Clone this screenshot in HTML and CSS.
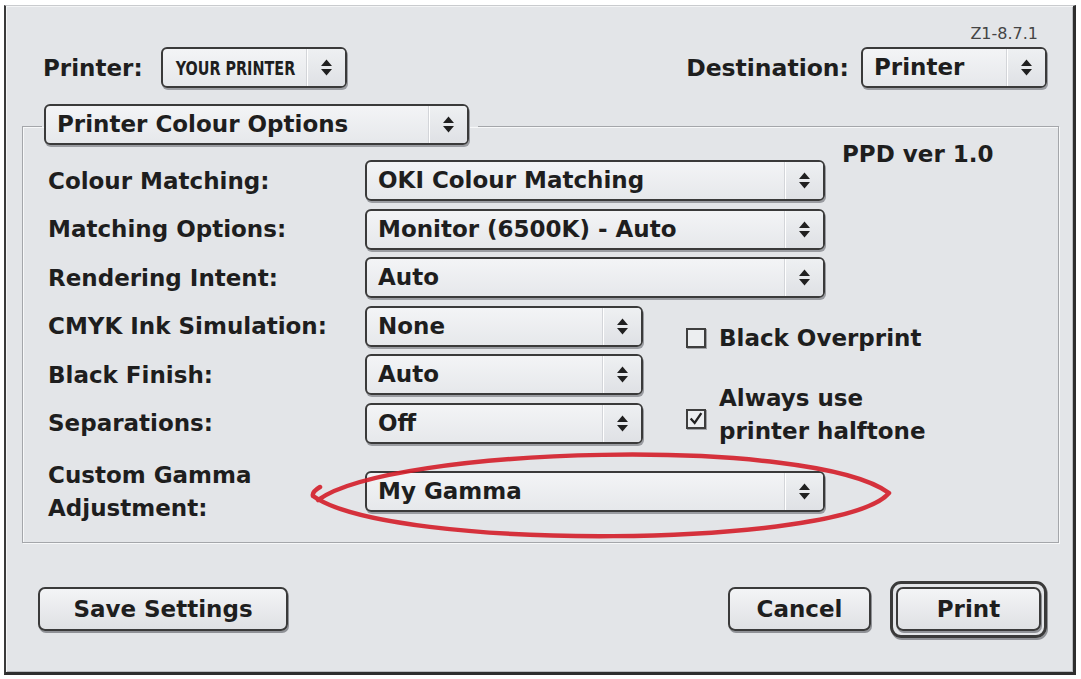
FILE: index.html
```html
<!DOCTYPE html>
<html>
<head>
<meta charset="utf-8">
<link rel="stylesheet" href="styles.css">
</head>
<body>
<div class="window">
  <div class="version">Z1-8.7.1</div>
  <div class="top-row">
    <div class="field">
      <span class="label">Printer:</span>
      <div class="popup popup-printer"><span class="ptext"><span class="narrow">YOUR PRINTER</span></span><span class="arrows"><svg width="13" height="19" viewBox="0 0 13 19"><polygon points="1,8 6.5,1.5 12,8" /><polygon points="1,11 12,11 6.5,17.5" /></svg></span></div>
    </div>
    <div class="field">
      <span class="label">Destination:</span>
      <div class="popup popup-dest"><span class="ptext">Printer</span><span class="arrows"><svg width="13" height="19" viewBox="0 0 13 19"><polygon points="1,8 6.5,1.5 12,8" /><polygon points="1,11 12,11 6.5,17.5" /></svg></span></div>
    </div>
  </div>

  <fieldset class="group">
    <legend class="group-legend">
      <div class="popup popup-legend"><span class="ptext">Printer Colour Options</span><span class="arrows"><svg width="13" height="19" viewBox="0 0 13 19"><polygon points="1,8 6.5,1.5 12,8" /><polygon points="1,11 12,11 6.5,17.5" /></svg></span></div>
    </legend>
    <div class="grid">
      <span class="label r1">Colour Matching:</span>
      <div class="popup wide r1"><span class="ptext">OKI Colour Matching</span><span class="arrows"><svg width="13" height="19" viewBox="0 0 13 19"><polygon points="1,8 6.5,1.5 12,8" /><polygon points="1,11 12,11 6.5,17.5" /></svg></span></div>
      <span class="label ppd">PPD ver 1.0</span>

      <span class="label r2">Matching Options:</span>
      <div class="popup wide r2"><span class="ptext">Monitor (6500K) - Auto</span><span class="arrows"><svg width="13" height="19" viewBox="0 0 13 19"><polygon points="1,8 6.5,1.5 12,8" /><polygon points="1,11 12,11 6.5,17.5" /></svg></span></div>

      <span class="label r3">Rendering Intent:</span>
      <div class="popup wide r3"><span class="ptext">Auto</span><span class="arrows"><svg width="13" height="19" viewBox="0 0 13 19"><polygon points="1,8 6.5,1.5 12,8" /><polygon points="1,11 12,11 6.5,17.5" /></svg></span></div>

      <span class="label r4">CMYK Ink Simulation:</span>
      <div class="popup short r4"><span class="ptext">None</span><span class="arrows"><svg width="13" height="19" viewBox="0 0 13 19"><polygon points="1,8 6.5,1.5 12,8" /><polygon points="1,11 12,11 6.5,17.5" /></svg></span></div>
      <div class="check check-overprint">
        <span class="box"></span>
        <span class="label">Black Overprint</span>
      </div>

      <span class="label r5">Black Finish:</span>
      <div class="popup short r5"><span class="ptext">Auto</span><span class="arrows"><svg width="13" height="19" viewBox="0 0 13 19"><polygon points="1,8 6.5,1.5 12,8" /><polygon points="1,11 12,11 6.5,17.5" /></svg></span></div>

      <span class="label r6">Separations:</span>
      <div class="popup short r6"><span class="ptext">Off</span><span class="arrows"><svg width="13" height="19" viewBox="0 0 13 19"><polygon points="1,8 6.5,1.5 12,8" /><polygon points="1,11 12,11 6.5,17.5" /></svg></span></div>
      <div class="check check-halftone">
        <span class="box checked"><svg width="18" height="18" viewBox="0 0 18 18"><path d="M3 8.5 L7.5 13.5 L15 2.5" /></svg></span>
        <span class="label two">Always use<br>printer halftone</span>
      </div>

      <span class="label two r7">Custom Gamma<br>Adjustment:</span>
      <div class="popup wide r7"><span class="ptext">My Gamma</span><span class="arrows"><svg width="13" height="19" viewBox="0 0 13 19"><polygon points="1,8 6.5,1.5 12,8" /><polygon points="1,11 12,11 6.5,17.5" /></svg></span></div>
    </div>
  </fieldset>

  <div class="buttons">
    <div class="btn btn-save">Save Settings</div>
    <div class="spacer"></div>
    <div class="btn btn-cancel">Cancel</div>
    <div class="default-ring"><div class="btn btn-print">Print</div></div>
  </div>
</div>
<svg class="circle" width="1081" height="679" viewBox="0 0 1081 679">
  <path d="M318 500 C 392 446, 812 436, 889 493 C 842 548, 392 552, 313 496 C 312 493, 315 490, 320 487" />
</svg>
</body>
</html>
```
FILE: styles.css
```css
html, body {
  margin: 0;
  padding: 0;
  background: #ffffff;
}

body {
  width: 1081px;
  height: 679px;
  overflow: hidden;
  position: relative;
  font-family: "DejaVu Sans", "Liberation Sans", sans-serif;
  color: #1e1e1e;
}

.window {
  margin: 5px 0 0 4px;
  width: 1072px;
  height: 670px;
  box-sizing: border-box;
  background: #e3e5e8;
  border-top: 1px solid #c9cbce;
  border-left: 2px solid #3a3a3a;
  border-right: 3px solid #2e2e2e;
  border-bottom: 3px solid #2e2e2e;
  box-shadow: inset 1px 1px 0 #f4f5f6, inset -1px -1px 0 #b9bbbf;
  padding: 19px 0 0 0;
  display: flex;
  flex-direction: column;
}

.version {
  align-self: flex-end;
  margin-right: 35px;
  font-size: 16px;
  line-height: 18px;
  color: #444;
}

.top-row {
  margin-top: 4px;
  padding: 0 26px 0 37px;
  display: flex;
  justify-content: space-between;
  align-items: center;
}

.field {
  display: flex;
  align-items: center;
}

.label {
  font-weight: bold;
  font-size: 23px;
  line-height: 28px;
  white-space: nowrap;
}

.label.two {
  line-height: 33px;
}

.field .label {
  margin-right: 18px;
}

.field + .field .label {
  margin-right: 12px;
  font-size: 23.5px;
}

.popup {
  box-sizing: border-box;
  height: 41px;
  border: 2px solid #3a3a3a;
  border-radius: 6px;
  background: linear-gradient(#f3f4f6, #e6e8eb);
  box-shadow: 1px 2px 0 #9a9ca1;
  display: flex;
  align-items: stretch;
}

.ptext {
  flex: 1;
  padding-left: 11px;
  font-weight: bold;
  font-size: 23px;
  line-height: 37px;
  white-space: nowrap;
  overflow: hidden;
}

.narrow {
  display: inline-block;
  font-family: "DejaVu Sans Condensed", "DejaVu Sans", sans-serif;
  font-size: 19.5px;
  transform: scaleX(0.82);
  transform-origin: 0 50%;
  padding-left: 2px;
}

.arrows {
  width: 37px;
  border-left: 1px solid #ffffff;
  box-shadow: -1px 0 0 #d3d5d9;
  background: linear-gradient(#eef0f2, #dfe1e5);
  border-radius: 0 4px 4px 0;
  display: flex;
  align-items: center;
  justify-content: center;
}

.arrows svg polygon {
  fill: #202020;
}

.popup-printer {
  width: 186px;
}

.popup-dest {
  width: 186px;
}

.popup-legend {
  width: 425px;
}

.group {
  margin: 16px 14px 0 16px;
  padding: 11px 10px 10px 25px;
  border: 1px solid #a4a6aa;
  box-shadow: 1px 1px 0 #f7f8f9, inset 1px 1px 0 #f7f8f9;
  min-width: 0;
}

.group-legend {
  margin-left: -6px;
  padding: 0 9px 4px 2px;
}

.grid {
  display: grid;
  grid-template-columns: 317px 278px 182px 1fr;
  grid-template-rows: repeat(6, 41px) 80px;
  row-gap: 7.6px;
  align-items: center;
}

.grid .label {
  grid-column: 1;
}

.r1 { grid-row: 1; }
.r2 { grid-row: 2; }
.r3 { grid-row: 3; }
.r4 { grid-row: 4; }
.r5 { grid-row: 5; }
.r6 { grid-row: 6; }
.r7 { grid-row: 7; }

.popup.wide {
  grid-column: 2 / span 2;
}

.popup.short {
  grid-column: 2;
}

.grid .ppd {
  grid-column: 4;
  grid-row: 1;
  align-self: start;
  margin-top: -20px;
  margin-left: 17px;
}

.check {
  grid-column: 3 / span 2;
  display: flex;
  align-items: center;
  padding-left: 43px;
}

.check .label {
  margin-left: 13px;
}

.check-overprint {
  grid-row: 4;
  margin-top: 24px;
}

.check-halftone {
  grid-row: 6;
  margin-top: -16px;
}

.check-halftone .box {
  margin-top: 8px;
}

.box {
  box-sizing: border-box;
  width: 20px;
  height: 20px;
  border: 2px solid #3e3e3e;
  background: #eceef0;
  box-shadow: 1px 1px 0 #a0a2a6;
  display: flex;
  align-items: center;
  justify-content: center;
  flex: none;
}

.box svg {
  margin-top: -1px;
}

.box svg path {
  fill: none;
  stroke: #222;
  stroke-width: 2.6;
}

.buttons {
  margin-top: 38px;
  padding: 0 26px 0 32px;
  display: flex;
  align-items: center;
}

.spacer {
  flex: 1;
}

.btn {
  box-sizing: border-box;
  height: 44px;
  border: 2px solid #3a3a3a;
  border-radius: 7px;
  background: linear-gradient(#f3f4f6, #dfe1e4);
  box-shadow: 1px 2px 0 #8f9196;
  font-weight: bold;
  font-size: 23px;
  line-height: 40px;
  text-align: center;
}

.btn-save {
  width: 250px;
}

.btn-cancel {
  width: 143px;
  margin-right: 19px;
}

.default-ring {
  box-sizing: border-box;
  width: 157px;
  height: 57px;
  border: 3px solid #3a3a3a;
  border-radius: 11px;
  padding: 3px;
  box-shadow: 1px 2px 0 #8f9196;
}

.btn-print {
  width: 100%;
}

.circle {
  position: absolute;
  left: 0;
  top: 0;
  pointer-events: none;
}

.circle path {
  fill: none;
  stroke: #d4222c;
  stroke-width: 4.5;
  stroke-linecap: round;
  stroke-linejoin: round;
  opacity: 0.92;
}
```
